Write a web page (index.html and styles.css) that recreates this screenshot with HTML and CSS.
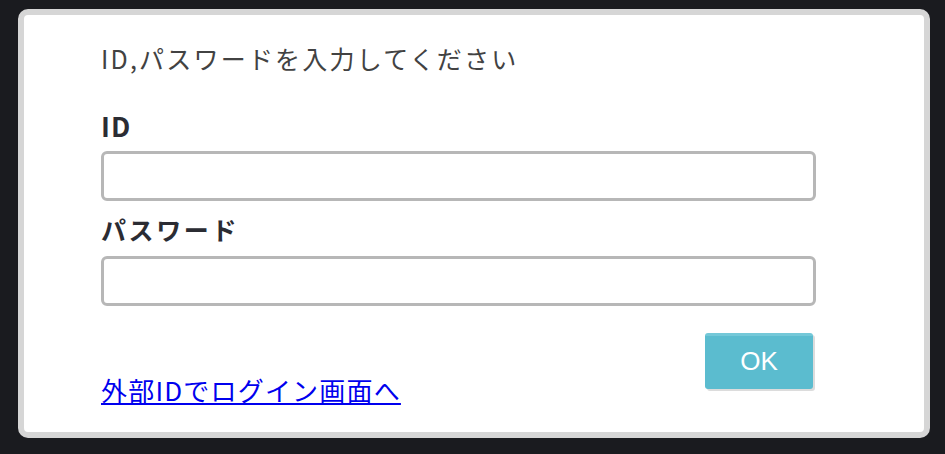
FILE: index.html
```html
<!DOCTYPE html>
<html lang="ja">
<head>
<meta charset="utf-8">
<title>ログイン</title>
<link rel="stylesheet" href="styles.css">
</head>
<body>
<div class="dialog">
  <div class="content">
    <p class="title">ID,パスワードを入力してください</p>
    <label class="label label-id" for="uid">ID</label>
    <input class="field" id="uid" type="text">
    <label class="label label-pw" for="pw">パスワード</label>
    <input class="field" id="pw" type="password">
    <div class="actions">
      <a class="ext-link" href="#">外部IDでログイン画面へ</a>
      <button class="ok" type="button">OK</button>
    </div>
  </div>
</div>
</body>
</html>
```
FILE: styles.css
```css
html, body {
  margin: 0;
  padding: 0;
  background: #1a1b1f;
}
body {
  font-family: "Noto Sans CJK JP", "Noto Sans", sans-serif;
  padding: 9px 15px 0 18px;
}
.dialog {
  box-sizing: border-box;
  width: 912px;
  height: 429px;
  background: #ffffff;
  border: 6px solid #d6d6d6;
  border-radius: 10px;
}
.content {
  width: 715px;
  padding: 26px 0 0 77px;
  display: flex;
  flex-direction: column;
}
.title {
  margin: 0;
  font-size: 25px;
  line-height: 34px;
  letter-spacing: 2.2px;
  color: #424242;
}
.label {
  display: block;
  font-size: 25px;
  font-weight: bold;
  line-height: 34px;
  letter-spacing: 2.6px;
  color: #2b2c33;
}
.label-id {
  margin-top: 34px;
  font-size: 27px;
  letter-spacing: 1px;
}
.label-pw {
  margin-top: 11px;
}
.field {
  box-sizing: border-box;
  width: 715px;
  height: 50px;
  margin: 8px 0 0 0;
  border: 3px solid #b7b7b7;
  border-radius: 6px;
  background: #fff;
  outline: none;
}
.label-pw + .field {
  margin-top: 10px;
}
.actions {
  display: flex;
  justify-content: space-between;
  align-items: flex-start;
  margin-top: 27px;
}
.ext-link {
  margin-top: 40px;
  font-size: 26px;
  line-height: 34px;
  letter-spacing: 1.2px;
  color: #0000ee;
  text-decoration: underline;
}
.ok {
  box-sizing: border-box;
  width: 108px;
  height: 56px;
  margin-right: 3px;
  border: none;
  border-top: 3px solid #74c8d8;
  border-radius: 3px;
  background: #5bbccf;
  box-shadow: 2px 2px 0 #dcdcdc;
  color: #ffffff;
  font-family: "Liberation Sans", Arial, sans-serif;
  font-size: 26px;
  padding: 0 0 3px 0;
}
```
